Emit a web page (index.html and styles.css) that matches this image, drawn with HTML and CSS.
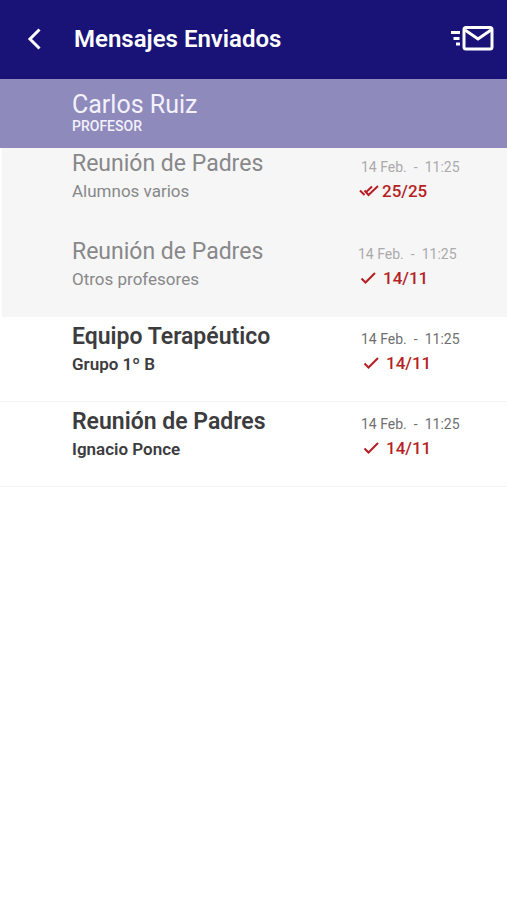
FILE: index.html
```html
<!DOCTYPE html>
<html lang="es">
<head>
<meta charset="utf-8">
<meta name="viewport" content="width=device-width, initial-scale=1">
<title>Mensajes Enviados</title>
<link rel="stylesheet" href="styles.css">
</head>
<body>
<svg class="sprite" aria-hidden="true">
  <symbol id="check" viewBox="0 0 20 16"><path d="M3.500 8.500l4 4L17 3"/></symbol>
  <symbol id="check-all" viewBox="0 0 20 16"><path d="M1 7.500l4.500 4.500M5.500 7.500L9.500 12L19 3M7.500 8.800L13 3.500"/></symbol>
</svg>
<header class="topbar">
  <button class="icon-button back" type="button" aria-label="Volver">
    <svg class="back-icon" viewBox="0 0 14 22"><path d="M12.500 1.500L3 11l9.500 9.500"/></svg>
  </button>
  <h1 class="title">Mensajes Enviados</h1>
  <button class="icon-button" type="button" aria-label="Enviar mensaje">
    <svg class="mail-icon" viewBox="0 0 44 26">
      <path d="M1 6.500h9M3.500 12.500h6M6 18h4"/>
      <rect x="14" y="1.500" width="28" height="21.500" rx="2"/>
      <path d="M15 4L28 13l13-9"/>
    </svg>
  </button>
</header>
<section class="profile">
  <h2 class="profile-name">Carlos Ruiz</h2>
  <p class="profile-role">PROFESOR</p>
</section>
<main>
  <ul class="list read">
    <li class="message">
      <div><h3 class="subject">Reunión de Padres</h3><p class="recipient">Alumnos varios</p></div>
      <div class="meta">
        <p class="date"><span>14 Feb.</span><span>-</span><span>11:25</span></p>
        <p class="count all"><svg class="check"><use href="#check-all"/></svg>25/25</p>
      </div>
    </li>
    <li class="message">
      <div><h3 class="subject">Reunión de Padres</h3><p class="recipient">Otros profesores</p></div>
      <div class="meta shifted">
        <p class="date"><span>14 Feb.</span><span>-</span><span>11:25</span></p>
        <p class="count"><svg class="check"><use href="#check"/></svg>14/11</p>
      </div>
    </li>
  </ul>
  <ul class="list unread">
    <li class="message">
      <div><h3 class="subject">Equipo Terapéutico</h3><p class="recipient">Grupo 1º B</p></div>
      <div class="meta">
        <p class="date"><span>14 Feb.</span><span>-</span><span>11:25</span></p>
        <p class="count"><svg class="check"><use href="#check"/></svg>14/11</p>
      </div>
    </li>
    <li class="message">
      <div><h3 class="subject">Reunión de Padres</h3><p class="recipient">Ignacio Ponce</p></div>
      <div class="meta">
        <p class="date"><span>14 Feb.</span><span>-</span><span>11:25</span></p>
        <p class="count"><svg class="check"><use href="#check"/></svg>14/11</p>
      </div>
    </li>
  </ul>
</main>
</body>
</html>
```
FILE: styles.css
```css
* { box-sizing: border-box; }
body { margin: 0; background: #fff; color: #3c3c3e; font-family: Roboto, sans-serif; }
h1, h2, h3, p, ul { margin: 0; padding: 0; }
ul { list-style: none; }
svg { fill: none; stroke: currentColor; }
.sprite { position: absolute; width: 0; height: 0; }

.topbar {
  display: flex;
  align-items: center;
  height: 79px;
  padding: 0 13px 2px 27px;
  background: #191378;
  color: #fff;
}
.icon-button { padding: 0; border: 0; background: none; color: inherit; }
.icon-button svg { display: block; }
.back { width: 47px; }
.back-icon { width: 14px; height: 22px; stroke-width: 3; }
.title { flex: 1; font-size: 24px; font-weight: 600; line-height: 32px; }
.mail-icon { width: 44px; height: 26px; stroke-width: 3; }

.profile { height: 69px; padding: 12px 72px 0; background: #8e8abb; color: #f3f1fd; }
.profile-name { font-size: 25px; font-weight: 400; line-height: 28px; }
.profile-role { font-size: 14px; font-weight: 500; line-height: 14px; }

.message {
  display: grid;
  grid-template-columns: 1fr 146px;
  padding-left: 72px;
}
.subject { font-size: 23px; font-weight: 400; line-height: 32px; }
.recipient { font-size: 17px; line-height: 22px; }
.meta { padding-top: 7px; }
.date { display: flex; gap: 7px; font-size: 14px; line-height: 24px; color: #6f6f71; }
.count {
  display: flex;
  align-items: center;
  gap: 5px;
  font-size: 17px;
  font-weight: 500;
  line-height: 24px;
  color: #b51f25;
}
.check { width: 20px; height: 16px; stroke-width: 2; }

.read { margin-left: 2px; background: #f6f6f6; color: #88888a; }
.read .message { height: 81px; padding-left: 70px; }
.read .message:first-child { height: 88px; }
.read .date { color: #aaaaac; }
.all { margin-left: -2px; gap: 3px; }
.shifted { margin-left: -3px; padding-top: 6px; }

.unread .message { height: 85px; padding-top: 3px; border-bottom: 1px solid #f3f3f3; }
.unread .subject { font-weight: 600; line-height: 34px; }
.unread .recipient { font-weight: 600; line-height: 20px; }
```
